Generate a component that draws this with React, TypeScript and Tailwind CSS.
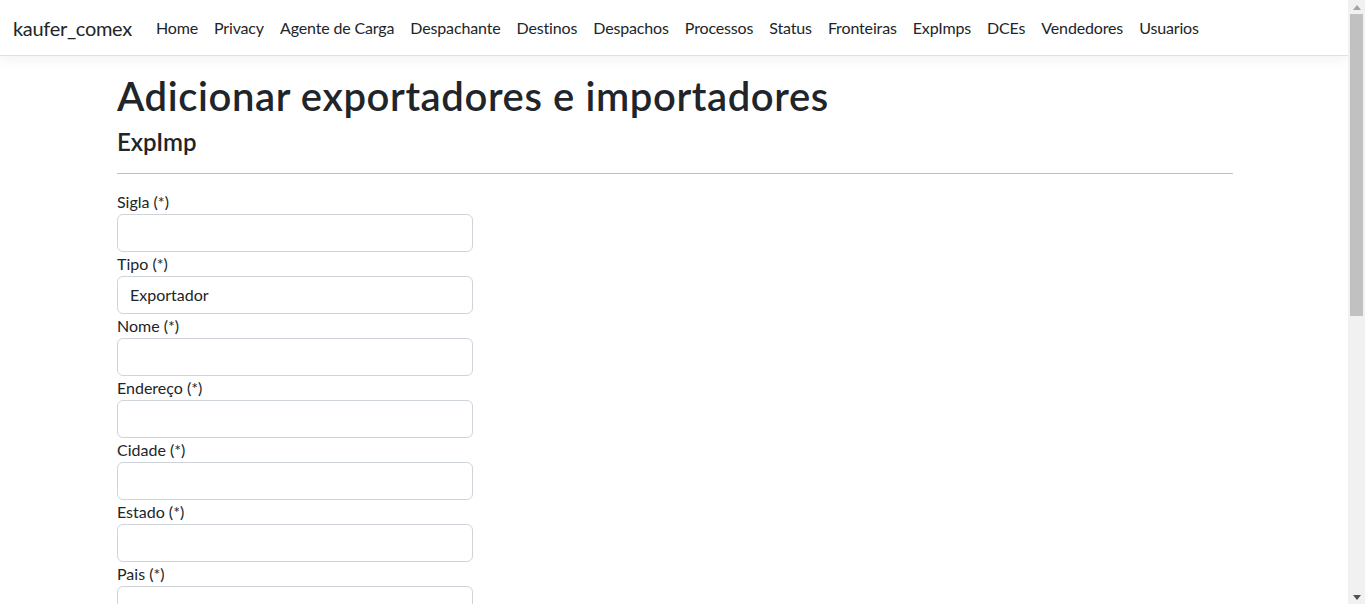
import React from "react";

const links = [
  "Home",
  "Privacy",
  "Agente de Carga",
  "Despachante",
  "Destinos",
  "Despachos",
  "Processos",
  "Status",
  "Fronteiras",
  "ExpImps",
  "DCEs",
  "Vendedores",
  "Usuarios",
];

const fields: { label: string; value?: string }[] = [
  { label: "Sigla (*)" },
  { label: "Tipo (*)", value: "Exportador" },
  { label: "Nome (*)" },
  { label: "Endereço (*)" },
  { label: "Cidade (*)" },
  { label: "Estado (*)" },
  { label: "Pais (*)" },
];

export default function App() {
  return (
    <div
      className="flex w-[1365px] h-[604px] overflow-hidden bg-white text-[#212529]"
      style={{ fontFamily: 'Lato, "Open Sans", sans-serif' }}
    >
      <div className="flex-1 flex flex-col min-w-0">
        <nav className="h-[56px] shrink-0 border-b border-[#dee2e6] flex items-center pl-[13px] pr-3 shadow-[0_0.25rem_0.75rem_rgba(0,0,0,0.05)]">
          <span className="text-[20px] leading-[30px] mr-4 tracking-[-0.3px] text-[#212529]">
            kaufer_comex
          </span>
          <ul className="flex items-center">
            {links.map((l) => (
              <li key={l} className="px-2 text-[16px] leading-6 tracking-[-0.15px] text-[#212529]">
                {l}
              </li>
            ))}
          </ul>
        </nav>
        <main className="w-[1140px] mx-auto pl-[13px] pr-[11px] pt-4">
          <h1 className="text-[40px] leading-[48px] font-semibold tracking-[0.6px] mb-2">
            Adicionar exportadores e importadores
          </h1>
          <h4 className="text-[24px] leading-[28.8px] font-semibold mb-2">ExpImp</h4>
          <hr className="my-4 border-t border-[#bfc0c1]" />
          <div className="flex flex-col w-[356px]">
            {fields.map((f) => (
              <div key={f.label} className="flex flex-col">
                <label className="text-[16px] leading-6">{f.label}</label>
                <div className="h-[38px] shrink-0 border border-[#ced4da] rounded-[6px] px-3 flex items-center text-[16px]">
                  {f.value ?? ""}
                </div>
              </div>
            ))}
          </div>
        </main>
      </div>
      <div className="w-[17px] shrink-0 bg-[#f1f1f1] flex flex-col items-center">
        <div className="h-[14px] w-full flex items-center justify-center">
          <svg width="8" height="5" viewBox="0 0 8 5">
            <polygon points="0,5 8,5 4,0" fill="#a3a3a3" />
          </svg>
        </div>
        <div className="w-[13px] h-[302px] bg-[#c1c1c1]" />
        <div className="flex-1" />
        <div className="h-[14px] w-full flex items-center justify-center">
          <svg width="8" height="5" viewBox="0 0 8 5">
            <polygon points="0,0 8,0 4,5" fill="#505050" />
          </svg>
        </div>
      </div>
    </div>
  );
}
